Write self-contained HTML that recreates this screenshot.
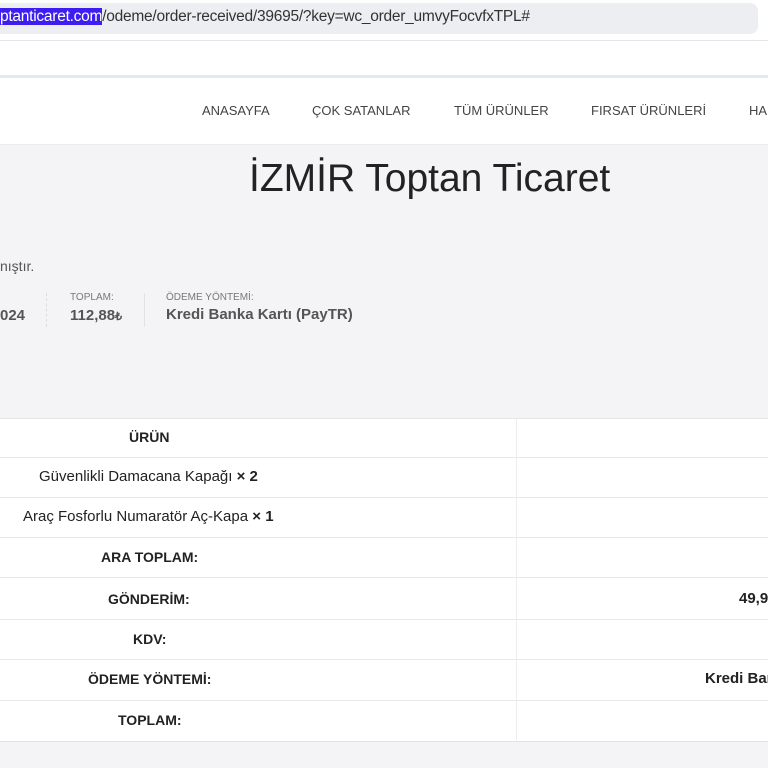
<!DOCTYPE html>
<html><head><meta charset="utf-8"><style>
body{margin:0;width:768px;height:768px;overflow:hidden;background:#f4f4f6;font-family:"Liberation Sans",sans-serif;position:relative}
.abs{position:absolute;white-space:nowrap}
.top{left:0;top:0;width:768px;height:40px;background:#fff}
.url{left:-20px;top:3px;width:778px;height:31px;background:#eceef1;border-radius:8px}
.urltext{left:0;top:8px;font-size:15.5px;color:#333;white-space:nowrap;letter-spacing:-0.25px}
.urltext span{background:#3d1df0;color:#fff}
.white2{left:0;top:40px;width:768px;height:36px;background:#fff;border-top:1px solid #e4e6ea}
.navline{left:0;top:75px;width:768px;height:3px;background:#e3e9ee}
.nav{left:0;top:78px;width:768px;height:66px;background:#fff;border-bottom:1px solid #ececec}
.nav div{position:absolute;top:25px;font-size:13px;color:#444}
h1{position:absolute;left:249px;top:157px;margin:0;font-weight:normal;font-size:39px;color:#222;white-space:nowrap}
.sm{font-size:10px;color:#777}
.bg{font-size:15px;font-weight:bold;color:#555}
.tbl{left:0;top:418px;width:768px;height:322px;background:#fff;border-top:1px solid #e6e6e6;border-bottom:1px solid #e2e2e2}
.row{position:absolute;left:0;width:768px;border-bottom:1px solid #e8e8e8}
.vl{left:516px;top:418px;width:1px;height:322px;background:#ececec}
.c{position:absolute;font-size:15px;color:#222;white-space:nowrap}
.h{font-weight:bold;font-size:14px}
</style></head><body>
<div class="abs top"></div>
<div class="abs url"></div>
<div class="abs urltext"><span>ptanticaret.com</span>/odeme/order-received/39695/?key=wc_order_umvyFocvfxTPL#</div>
<div class="abs white2"></div>
<div class="abs navline"></div>
<div class="abs nav">
<div style="left:202px">ANASAYFA</div>
<div style="left:312px">ÇOK SATANLAR</div>
<div style="left:454px">TÜM ÜRÜNLER</div>
<div style="left:591px">FIRSAT ÜRÜNLERİ</div>
<div style="left:749px">HA</div>
</div>
<h1>İZMİR Toptan Ticaret</h1>
<div class="abs" style="left:0;top:258px;font-size:14px;color:#555">nıştır.</div>
<div class="abs bg" style="left:0;top:307px">024</div>
<div class="abs" style="left:46px;top:293px;width:1px;height:34px;border-left:1px dashed #ddd"></div>
<div class="abs sm" style="left:70px;top:292px">TOPLAM:</div>
<div class="abs bg" style="left:70px;top:307px">112,88<span style="font-size:11px">₺</span></div>
<div class="abs" style="left:144px;top:293px;width:1px;height:34px;background:#e2e2e2"></div>
<div class="abs sm" style="left:166px;top:292px">ÖDEME YÖNTEMİ:</div>
<div class="abs bg" style="left:166px;top:306px">Kredi Banka Kartı (PayTR)</div>
<div class="abs tbl"></div>
<div class="row" style="top:418px;height:39px"></div>
<div class="row" style="top:458px;height:39px"></div>
<div class="row" style="top:498px;height:39px"></div>
<div class="row" style="top:538px;height:39px"></div>
<div class="row" style="top:578px;height:41px"></div>
<div class="row" style="top:620px;height:39px"></div>
<div class="row" style="top:660px;height:40px"></div>
<div class="abs vl"></div>
<div class="c h" style="left:129px;top:429px">ÜRÜN</div>
<div class="c" style="left:39px;top:468px">Güvenlikli Damacana Kapağı <b>× 2</b></div>
<div class="c" style="left:23px;top:508px">Araç Fosforlu Numaratör Aç-Kapa <b>× 1</b></div>
<div class="c h" style="left:101px;top:549px">ARA TOPLAM:</div>
<div class="c h" style="left:108px;top:591px">GÖNDERİM:</div>
<div class="c h" style="left:133px;top:631px">KDV:</div>
<div class="c h" style="left:88px;top:671px">ÖDEME YÖNTEMİ:</div>
<div class="c h" style="left:118px;top:712px">TOPLAM:</div>
<div class="c" style="left:739px;top:590px;font-weight:bold">49,9</div>
<div class="c" style="left:705px;top:670px;font-weight:bold">Kredi Ban</div>
</body></html>
